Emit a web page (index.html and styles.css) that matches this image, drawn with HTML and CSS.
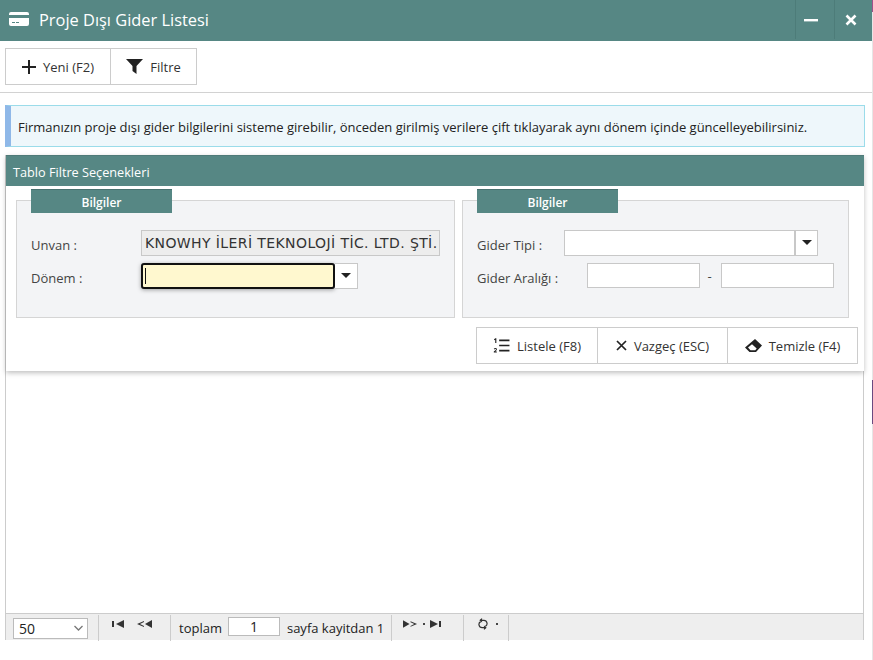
FILE: index.html
```html
<!DOCTYPE html>
<html lang="tr">
<head>
    <meta charset="UTF-8">
    <meta name="viewport" content="width=device-width, initial-scale=1.0">
    <title>Proje Dışı Gider Listesi</title>
    <link rel="stylesheet" href="styles.css">
</head>
<body>
    <div class="window">
        <div class="titlebar">
            <svg class="title-icon" width="20" height="16" viewBox="0 0 20 16"><path d="M2 1h16a2 2 0 0 1 2 2v1H0V3a2 2 0 0 1 2-2zM0 7h20v6a2 2 0 0 1-2 2H2a2 2 0 0 1-2-2zm3 4v1h3v-1zm4 0v1h3v-1z" fill="#fff" fill-rule="evenodd"/></svg>
            <span class="title-text">Proje Dışı Gider Listesi</span>
            <div class="win-btn win-min">
                <svg width="14" height="14" viewBox="0 0 14 14"><rect x="0" y="6" width="14" height="2.4" fill="#fff"/></svg>
            </div>
            <div class="win-btn win-close">
                <svg width="12" height="12" viewBox="0 0 12 12"><path d="M1.500 1.500l9 9M10.500 1.500l-9 9" stroke="#fff" stroke-width="2.600"/></svg>
            </div>
        </div>

        <div class="toolbar">
            <div class="btn-group">
                <button class="btn btn-new">
                    <svg width="14" height="14" viewBox="0 0 14 14"><path d="M7 0v14M0 7h14" stroke="#222" stroke-width="2"/></svg>
                    Yeni (F2)
                </button>
                <button class="btn btn-filter">
                    <svg width="17" height="15" viewBox="0 0 17 15"><path d="M0 0h17l-6.500 7v8l-4-3V7z" fill="#222"/></svg>
                    Filtre
                </button>
            </div>
        </div>

        <div class="info">Firmanızın proje dışı gider bilgilerini sisteme girebilir, önceden girilmiş verilere çift tıklayarak aynı dönem içinde güncelleyebilirsiniz.</div>

        <div class="grid-box">
            <div class="filter-panel">
                <div class="panel-head">Tablo Filtre Seçenekleri</div>
                <div class="groups">
                    <div class="group group-left">
                        <div class="legend">Bilgiler</div>
                        <div class="row row-first">
                            <label class="lbl lbl-left">Unvan :</label>
                            <div class="readonly">KNOWHY İLERİ TEKNOLOJİ TİC. LTD. ŞTİ.</div>
                        </div>
                        <div class="row">
                            <label class="lbl lbl-left">Dönem :</label>
                            <div class="combo combo-donem">
                                <div class="combo-focus"><span class="caret"></span></div>
                                <div class="combo-arrow"><span class="arrow"></span></div>
                            </div>
                        </div>
                    </div>
                    <div class="group group-right">
                        <div class="legend">Bilgiler</div>
                        <div class="row row-first">
                            <label class="lbl lbl-tip">Gider Tipi :</label>
                            <div class="combo combo-tip">
                                <div class="combo-input"></div>
                                <div class="combo-arrow"><span class="arrow"></span></div>
                            </div>
                        </div>
                        <div class="row">
                            <label class="lbl lbl-range">Gider Aralığı :</label>
                            <input class="range-input" type="text">
                            <span class="dash">-</span>
                            <input class="range-input" type="text">
                        </div>
                    </div>
                </div>
                <div class="actions">
                    <button class="btn btn-list">
                        <svg width="17" height="15" viewBox="0 0 18 16"><path d="M6.500 2.500h11M6.500 8h11M6.500 13.500h11" stroke="#222" stroke-width="1.800"/><path d="M1 1.200l1.500-1h1v5h-1.200V1.800L1.300 2.300zM.8 15.500v-1l2-1.800c.6-.6.2-1.100-.3-1.100-.4 0-.8.200-1.200.6l-.5-.9c.5-.5 1.100-.7 1.800-.7 1.400 0 2.100 1.300 1.100 2.500l-1.200 1.200h1.500v1.200z" fill="#222"/></svg>
                        Listele (F8)
                    </button>
                    <button class="btn btn-cancel">
                        <svg width="11" height="11" viewBox="0 0 11 11"><path d="M1 1l9 9M10 1l-9 9" stroke="#222" stroke-width="1.700"/></svg>
                        Vazgeç (ESC)
                    </button>
                    <button class="btn btn-clear">
                        <svg width="17" height="14" viewBox="0 0 17 14"><path d="M10 0l7 6.500-6 6.500H4.500L0 8.500zM3 8.500l2.500 2.800h4.700l1.500-1.700-4.700-4.300z" fill="#222" fill-rule="evenodd"/></svg>
                        Temizle (F4)
                    </button>
                </div>
            </div>
            <div class="grid-body"></div>
            <div class="pager">
                <div class="pager-cell cell-size">
                    <div class="page-size">
                        <span>50</span>
                        <svg width="9" height="6" viewBox="0 0 9 6"><path d="M.5 1L4.500 5l4-4" fill="none" stroke="#777" stroke-width="1.300"/></svg>
                    </div>
                </div>
                <div class="pager-cell cell-prev">
                    <svg width="14" height="8" viewBox="0 0 14 8"><path d="M0 1h2v6H0zM12 0v8L4 4z" fill="#333"/></svg>
                    <svg width="16" height="8" viewBox="0 0 16 8"><path d="M15 0v8L8 4zM7 1v1L3 4l4 2v1L0 4z" fill="#333"/></svg>
                </div>
                <div class="pager-cell cell-page">
                    <span>toplam</span>
                    <input class="page-input" type="text" value="1">
                    <span>sayfa kayitdan 1</span>
                </div>
                <div class="pager-cell cell-next">
                    <svg width="15" height="8" viewBox="0 0 16 8"><path d="M0 0v8l7-4zM8 1v1l4 2-4 2v1l7-3z" fill="#333"/></svg>
                    <span class="dot"></span>
                    <svg width="12" height="8" viewBox="0 0 12 8"><path d="M0 0v8l8-4zM9 1h2v6H9z" fill="#333"/></svg>
                </div>
                <div class="pager-cell cell-reload">
                    <svg width="10" height="12" viewBox="1 0 10 13"><path d="M3 2.500h4a3.500 3.500 0 0 1 1.500 6.600M9 10.500H5A3.500 3.500 0 0 1 3.500 3.900" fill="none" stroke="#333" stroke-width="1.300"/><path d="M5 0v5L2 2.500zM7 8v5l3-2.500z" fill="#333"/></svg>
                    <span class="dot"></span>
                </div>
                <div class="pager-cell cell-rest"></div>
            </div>
        </div>
    </div>
    <div class="edge"></div>
</body>
</html>
```

FILE: styles.css
```css
* {
    box-sizing: border-box;
}
html, body {
    margin: 0;
    height: 660px;
    overflow: hidden;
    background: white;
}
body {
    font-family: "Open Sans", Arial, sans-serif;
    font-size: 13px;
    color: #333;
    display: flex;
    align-items: flex-start;
}
.window {
    width: 872px;
    height: 640px;
    display: flex;
    flex-direction: column;
}
/* sliver of the page behind the window */
.edge {
    width: 1px;
    height: 660px;
    background: linear-gradient(#a0508a 0 12px, #e6e6e6 12px 380px, #6a4a80 380px 424px, #e6e6e6 424px);
}
.titlebar {
    height: 41px;
    background-color: #568784;
    color: white;
    display: flex;
    align-items: center;
    padding: 0 0 3px 9px;
    flex-shrink: 0;
}
.title-icon {
    margin-right: 10px;
}
.title-text {
    font-size: 16.4px;
    flex: 1;
}
.win-btn {
    height: 39px;
    align-self: flex-start;
    border-left: 1px solid #4d7c79;
    display: flex;
    align-items: center;
    justify-content: center;
}
.win-min {
    width: 39px;
    padding-right: 9px;
}
.win-close {
    width: 38px;
    padding-right: 6px;
}
.toolbar {
    height: 52px;
    padding: 7px 5px 0;
    border-bottom: 1px solid #d2d2d2;
    flex-shrink: 0;
}
.btn-group {
    display: flex;
}
.btn {
    height: 37px;
    font-family: inherit;
    font-size: 13px;
    color: #333;
    background: white;
    border: 1px solid #ccc;
    display: flex;
    align-items: center;
    justify-content: center;
    gap: 7px;
    padding: 0;
}
.btn-new {
    width: 106px;
}
.btn-filter {
    width: 87px;
    margin-left: -1px;
}
.info {
    height: 42px;
    margin: 12px 7px 8px 5px;
    padding-left: 7px;
    line-height: 42px;
    font-size: 13px;
    color: #222;
    background-color: #eef7fb;
    border: 1px solid #9bdcea;
    border-left: 6px solid #8fb8e8;
    white-space: nowrap;
    flex-shrink: 0;
}
.grid-box {
    margin: 0 8px 0 5px;
    flex: 1;
    display: flex;
    flex-direction: column;
    border-left: 1px solid #ccc;
    border-right: 1px solid #ccc;
}
.filter-panel {
    height: 216px;
    margin-right: -1px;
    background: white;
    box-shadow: 0 2px 5px rgba(0, 0, 0, 0.25);
    flex-shrink: 0;
}
.panel-head {
    height: 31px;
    padding-left: 7px;
    line-height: 33px;
    font-size: 12.7px;
    color: white;
    background-color: #568784;
    border-top: 1px solid #4f7a78;
}
.groups {
    display: flex;
    padding: 14px 0 0 10px;
    gap: 7px;
}
.group {
    height: 118px;
    background-color: #f3f4f6;
    border: 1px solid #d5d5d5;
    padding-left: 14px;
}
.group-left {
    width: 439px;
}
.group-right {
    width: 387px;
}
.legend {
    width: 141px;
    height: 24px;
    margin-top: -12px;
    line-height: 25px;
    text-align: center;
    font-size: 12px;
    font-weight: 600;
    color: white;
    background-color: #568784;
    border-top: 1px solid #47716f;
}
.row {
    display: flex;
    align-items: center;
    height: 25px;
    margin-top: 8px;
}
.row-first {
    margin-top: 17px;
}
.lbl {
    font-size: 13px;
    color: #444;
    padding-top: 4px;
}
.lbl-left {
    width: 110px;
}
.lbl-tip {
    width: 87px;
}
.lbl-range {
    width: 110px;
}
.readonly {
    width: 299px;
    height: 26px;
    line-height: 24px;
    padding-left: 3px;
    font-family: "DejaVu Sans", Verdana, sans-serif;
    font-size: 14px;
    letter-spacing: 0.4px;
    white-space: nowrap;
    background-color: #ededed;
    border: 1px solid #c8c8c8;
    color: #333;
}
.combo {
    display: flex;
    height: 26px;
}
.combo-donem {
    width: 217px;
}
.combo-tip {
    width: 254px;
}
.combo-focus {
    flex: 1;
    background-color: #fff8cf;
    border: 2px solid #111;
    border-radius: 3px;
    box-shadow: 0 1px 4px rgba(0, 0, 0, 0.35);
    padding-left: 2px;
    display: flex;
    align-items: center;
}
.caret {
    width: 1px;
    height: 16px;
    background: #111;
}
.combo-input {
    flex: 1;
    background: white;
    border: 1px solid #c8c8c8;
}
.combo-arrow {
    width: 23px;
    background: white;
    border: 1px solid #c8c8c8;
    border-left: none;
    display: flex;
    align-items: center;
    justify-content: center;
}
.combo-tip .combo-arrow {
    border-left: 1px solid #c8c8c8;
}
.arrow {
    width: 0;
    height: 0;
    border-left: 5px solid transparent;
    border-right: 5px solid transparent;
    border-top: 5px solid #222;
}
.range-input {
    width: 113px;
    height: 25px;
    background: white;
    border: 1px solid #c8c8c8;
    padding: 0;
}
.dash {
    width: 21px;
    padding-right: 2px;
    text-align: center;
    color: #444;
}
.actions {
    display: flex;
    justify-content: flex-end;
    padding: 9px 6px 0 0;
}
.btn-list {
    width: 122px;
}
.btn-cancel {
    width: 131px;
    margin-left: -1px;
}
.btn-clear {
    width: 131px;
    margin-left: -1px;
}
.grid-body {
    flex: 1;
}
.pager {
    height: 27px;
    display: flex;
    background-color: #eee;
    border-top: 1px solid #ccc;
    flex-shrink: 0;
}
.pager-cell {
    height: 100%;
    display: flex;
    align-items: center;
    border-right: 1px solid #ccc;
    margin-top: 1px;
}
.cell-size {
    width: 93px;
    padding-left: 7px;
}
.page-size {
    width: 75px;
    height: 21px;
    padding: 0 4px 0 5px;
    font-size: 14px;
    background: white;
    border: 1px solid #bbb;
    color: #222;
    display: flex;
    align-items: center;
    justify-content: space-between;
}
.cell-prev {
    width: 72px;
    padding: 0 0 8px 13px;
    gap: 11px;
}
.cell-page {
    width: 221px;
    padding-left: 8px;
    gap: 6px;
    color: #222;
}
.page-input {
    width: 52px;
    height: 19px;
    margin: 0 1px 4px 0;
    text-align: center;
    font-family: inherit;
    font-size: 14px;
    background: white;
    border: 1px solid #bbb;
    color: #222;
    padding: 0;
}
.cell-next {
    width: 72px;
    padding: 0 0 8px 11px;
    gap: 5px;
}
.cell-reload {
    width: 45px;
    padding: 0 0 8px 14px;
    gap: 8px;
}
.cell-rest {
    flex: 1;
    border-right: none;
}
.dot {
    width: 2px;
    height: 2px;
    background: #444;
}
```
